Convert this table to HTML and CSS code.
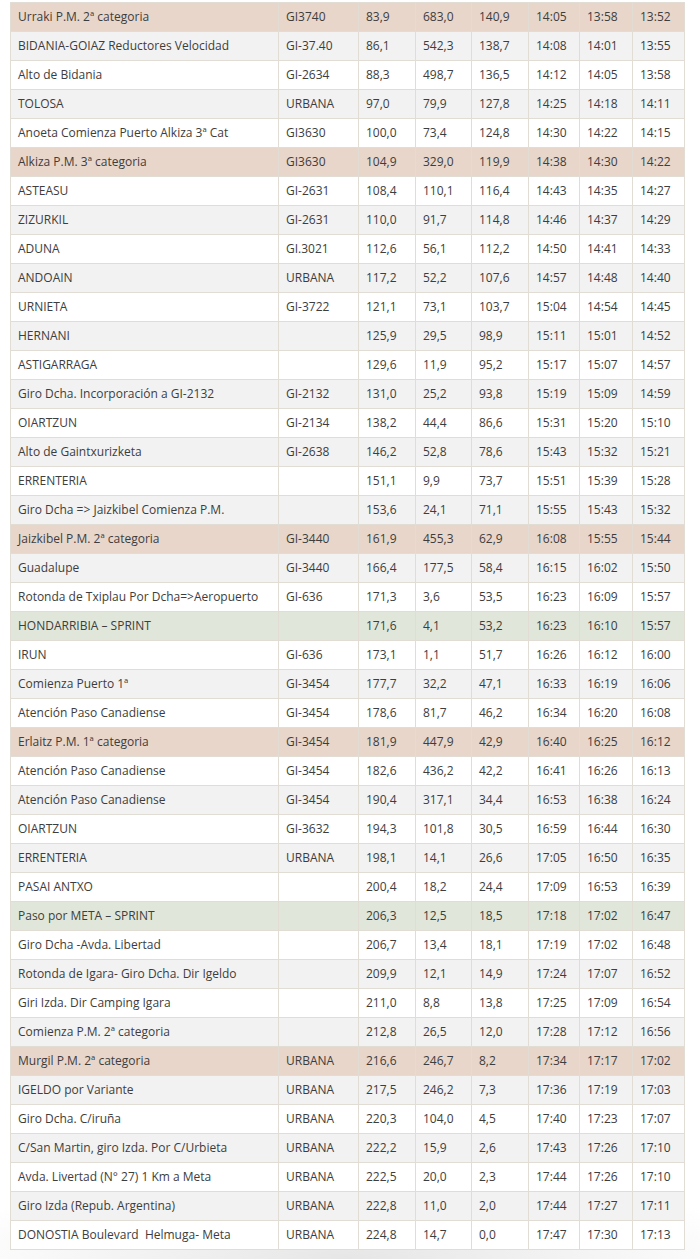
FILE: index.html
```html
<!DOCTYPE html>
<html lang="es">
<head>
<meta charset="utf-8">
<title>Horario</title>
<link rel="stylesheet" href="styles.css">
</head>
<body>
<div class="wrap">
<table class="route">
<colgroup>
<col class="c1"><col class="c2"><col class="c3"><col class="c4"><col class="c5"><col class="c6"><col class="c7"><col class="c8">
</colgroup>
<tbody>
<tr class="pm"><td>Urraki P.M. 2ª categoria</td><td>GI3740</td><td>83,9</td><td>683,0</td><td>140,9</td><td>14:05</td><td>13:58</td><td>13:52</td></tr>
<tr><td>BIDANIA-GOIAZ Reductores Velocidad</td><td>GI-37.40</td><td>86,1</td><td>542,3</td><td>138,7</td><td>14:08</td><td>14:01</td><td>13:55</td></tr>
<tr><td>Alto de Bidania</td><td>GI-2634</td><td>88,3</td><td>498,7</td><td>136,5</td><td>14:12</td><td>14:05</td><td>13:58</td></tr>
<tr><td>TOLOSA</td><td>URBANA</td><td>97,0</td><td>79,9</td><td>127,8</td><td>14:25</td><td>14:18</td><td>14:11</td></tr>
<tr><td>Anoeta Comienza Puerto Alkiza 3ª Cat</td><td>GI3630</td><td>100,0</td><td>73,4</td><td>124,8</td><td>14:30</td><td>14:22</td><td>14:15</td></tr>
<tr class="pm"><td>Alkiza P.M. 3ª categoria</td><td>GI3630</td><td>104,9</td><td>329,0</td><td>119,9</td><td>14:38</td><td>14:30</td><td>14:22</td></tr>
<tr><td>ASTEASU</td><td>GI-2631</td><td>108,4</td><td>110,1</td><td>116,4</td><td>14:43</td><td>14:35</td><td>14:27</td></tr>
<tr><td>ZIZURKIL</td><td>GI-2631</td><td>110,0</td><td>91,7</td><td>114,8</td><td>14:46</td><td>14:37</td><td>14:29</td></tr>
<tr><td>ADUNA</td><td>GI.3021</td><td>112,6</td><td>56,1</td><td>112,2</td><td>14:50</td><td>14:41</td><td>14:33</td></tr>
<tr><td>ANDOAIN</td><td>URBANA</td><td>117,2</td><td>52,2</td><td>107,6</td><td>14:57</td><td>14:48</td><td>14:40</td></tr>
<tr><td>URNIETA</td><td>GI-3722</td><td>121,1</td><td>73,1</td><td>103,7</td><td>15:04</td><td>14:54</td><td>14:45</td></tr>
<tr><td>HERNANI</td><td></td><td>125,9</td><td>29,5</td><td>98,9</td><td>15:11</td><td>15:01</td><td>14:52</td></tr>
<tr><td>ASTIGARRAGA</td><td></td><td>129,6</td><td>11,9</td><td>95,2</td><td>15:17</td><td>15:07</td><td>14:57</td></tr>
<tr><td>Giro Dcha. Incorporación a GI-2132</td><td>GI-2132</td><td>131,0</td><td>25,2</td><td>93,8</td><td>15:19</td><td>15:09</td><td>14:59</td></tr>
<tr><td>OIARTZUN</td><td>GI-2134</td><td>138,2</td><td>44,4</td><td>86,6</td><td>15:31</td><td>15:20</td><td>15:10</td></tr>
<tr><td>Alto de Gaintxurizketa</td><td>GI-2638</td><td>146,2</td><td>52,8</td><td>78,6</td><td>15:43</td><td>15:32</td><td>15:21</td></tr>
<tr><td>ERRENTERIA</td><td></td><td>151,1</td><td>9,9</td><td>73,7</td><td>15:51</td><td>15:39</td><td>15:28</td></tr>
<tr><td>Giro Dcha =&gt; Jaizkibel Comienza P.M.</td><td></td><td>153,6</td><td>24,1</td><td>71,1</td><td>15:55</td><td>15:43</td><td>15:32</td></tr>
<tr class="pm"><td>Jaizkibel P.M. 2ª categoria</td><td>GI-3440</td><td>161,9</td><td>455,3</td><td>62,9</td><td>16:08</td><td>15:55</td><td>15:44</td></tr>
<tr><td>Guadalupe</td><td>GI-3440</td><td>166,4</td><td>177,5</td><td>58,4</td><td>16:15</td><td>16:02</td><td>15:50</td></tr>
<tr><td>Rotonda de Txiplau Por Dcha=&gt;Aeropuerto</td><td>GI-636</td><td>171,3</td><td>3,6</td><td>53,5</td><td>16:23</td><td>16:09</td><td>15:57</td></tr>
<tr class="sprint"><td>HONDARRIBIA – SPRINT</td><td></td><td>171,6</td><td>4,1</td><td>53,2</td><td>16:23</td><td>16:10</td><td>15:57</td></tr>
<tr><td>IRUN</td><td>GI-636</td><td>173,1</td><td>1,1</td><td>51,7</td><td>16:26</td><td>16:12</td><td>16:00</td></tr>
<tr><td>Comienza Puerto 1ª</td><td>GI-3454</td><td>177,7</td><td>32,2</td><td>47,1</td><td>16:33</td><td>16:19</td><td>16:06</td></tr>
<tr><td>Atención Paso Canadiense</td><td>GI-3454</td><td>178,6</td><td>81,7</td><td>46,2</td><td>16:34</td><td>16:20</td><td>16:08</td></tr>
<tr class="pm"><td>Erlaitz P.M. 1ª categoria</td><td>GI-3454</td><td>181,9</td><td>447,9</td><td>42,9</td><td>16:40</td><td>16:25</td><td>16:12</td></tr>
<tr><td>Atención Paso Canadiense</td><td>GI-3454</td><td>182,6</td><td>436,2</td><td>42,2</td><td>16:41</td><td>16:26</td><td>16:13</td></tr>
<tr><td>Atención Paso Canadiense</td><td>GI-3454</td><td>190,4</td><td>317,1</td><td>34,4</td><td>16:53</td><td>16:38</td><td>16:24</td></tr>
<tr><td>OIARTZUN</td><td>GI-3632</td><td>194,3</td><td>101,8</td><td>30,5</td><td>16:59</td><td>16:44</td><td>16:30</td></tr>
<tr><td>ERRENTERIA</td><td>URBANA</td><td>198,1</td><td>14,1</td><td>26,6</td><td>17:05</td><td>16:50</td><td>16:35</td></tr>
<tr><td>PASAI ANTXO</td><td></td><td>200,4</td><td>18,2</td><td>24,4</td><td>17:09</td><td>16:53</td><td>16:39</td></tr>
<tr class="sprint"><td>Paso por META – SPRINT</td><td></td><td>206,3</td><td>12,5</td><td>18,5</td><td>17:18</td><td>17:02</td><td>16:47</td></tr>
<tr><td>Giro Dcha -Avda. Libertad</td><td></td><td>206,7</td><td>13,4</td><td>18,1</td><td>17:19</td><td>17:02</td><td>16:48</td></tr>
<tr><td>Rotonda de Igara- Giro Dcha. Dir Igeldo</td><td></td><td>209,9</td><td>12,1</td><td>14,9</td><td>17:24</td><td>17:07</td><td>16:52</td></tr>
<tr><td>Giri Izda. Dir Camping Igara</td><td></td><td>211,0</td><td>8,8</td><td>13,8</td><td>17:25</td><td>17:09</td><td>16:54</td></tr>
<tr><td>Comienza P.M. 2ª categoria</td><td></td><td>212,8</td><td>26,5</td><td>12,0</td><td>17:28</td><td>17:12</td><td>16:56</td></tr>
<tr class="pm"><td>Murgil P.M. 2ª categoria</td><td>URBANA</td><td>216,6</td><td>246,7</td><td>8,2</td><td>17:34</td><td>17:17</td><td>17:02</td></tr>
<tr><td>IGELDO por Variante</td><td>URBANA</td><td>217,5</td><td>246,2</td><td>7,3</td><td>17:36</td><td>17:19</td><td>17:03</td></tr>
<tr><td>Giro Dcha. C/iruña</td><td>URBANA</td><td>220,3</td><td>104,0</td><td>4,5</td><td>17:40</td><td>17:23</td><td>17:07</td></tr>
<tr><td>C/San Martin, giro Izda. Por C/Urbieta</td><td>URBANA</td><td>222,2</td><td>15,9</td><td>2,6</td><td>17:43</td><td>17:26</td><td>17:10</td></tr>
<tr><td>Avda. Livertad (N° 27) 1 Km a Meta</td><td>URBANA</td><td>222,5</td><td>20,0</td><td>2,3</td><td>17:44</td><td>17:26</td><td>17:10</td></tr>
<tr><td>Giro Izda (Repub. Argentina)</td><td>URBANA</td><td>222,8</td><td>11,0</td><td>2,0</td><td>17:44</td><td>17:27</td><td>17:11</td></tr>
<tr><td>DONOSTIA Boulevard&nbsp; Helmuga- Meta</td><td>URBANA</td><td>224,8</td><td>14,7</td><td>0,0</td><td>17:47</td><td>17:30</td><td>17:13</td></tr>
</tbody>
</table>
</div>
</body>
</html>
```

FILE: styles.css
```css
html, body {
  margin: 0;
  padding: 0;
  background: #ffffff;
}

.wrap {
  padding: 2px 16px 9px 10px;
  background:
    radial-gradient(ellipse 60% 90px at 50% 100%, #e6e6e6 0%, rgba(255,255,255,0) 100%),
    #ffffff;
}

.route {
  border-collapse: collapse;
  table-layout: fixed;
  width: 674px;
  font-family: "Open Sans", "Liberation Sans", sans-serif;
  font-size: 12px;
  color: #3d3d3d;
  background: #ffffff;
}

.c1 { width: 268px; }
.c2 { width: 80px; }
.c3 { width: 57px; }
.c4 { width: 56px; }
.c5 { width: 57px; }
.c6 { width: 51px; }
.c7 { width: 53px; }
.c8 { width: 52px; }

.route td {
  border: 1px solid #e1ddd4;
  padding: 5px 7px;
  line-height: 18px;
  height: 18px;
  white-space: nowrap;
  overflow: hidden;
  text-align: left;
}

.route tr:nth-child(even) td {
  background: #f2f2f2;
}

.route tr.pm td {
  background: #e8d6cb;
}

.route tr.sprint td {
  background: #e0e7da;
}
```
